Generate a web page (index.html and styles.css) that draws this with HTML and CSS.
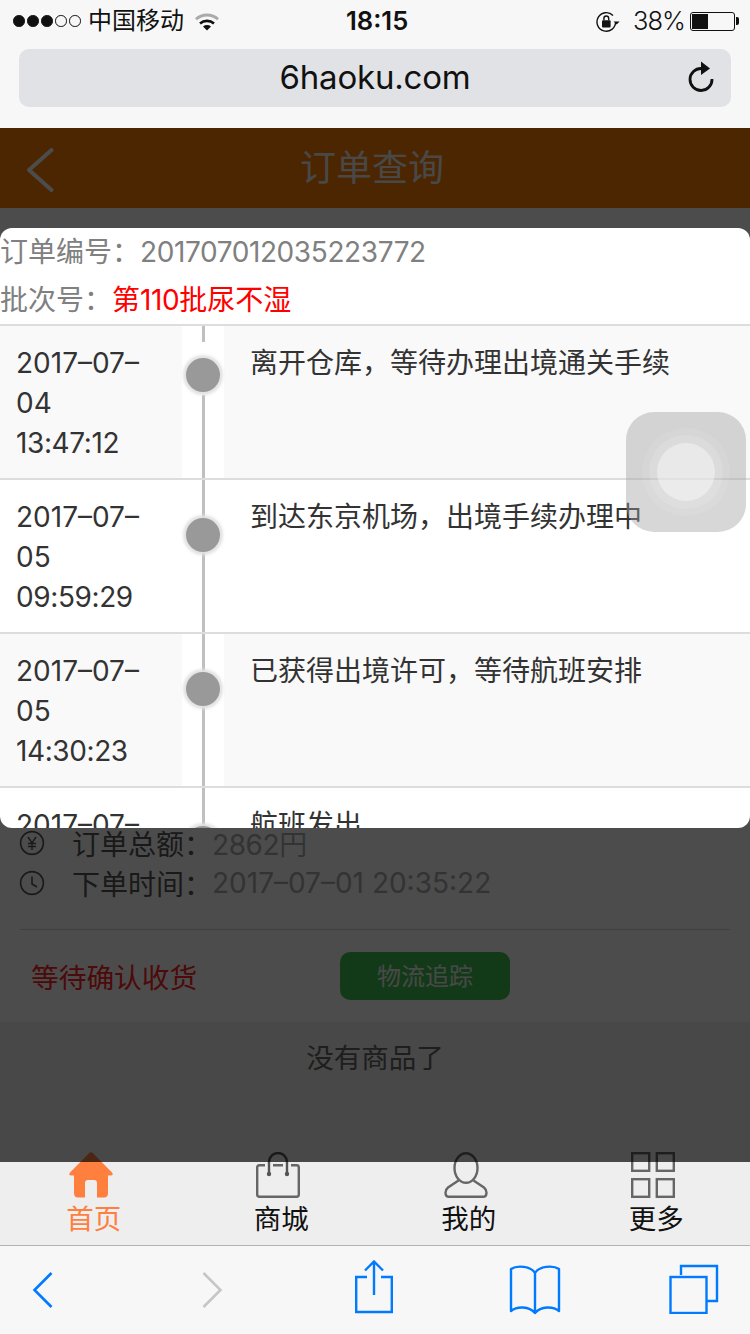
FILE: index.html
```html
<!DOCTYPE html>
<html lang="zh-CN">
<head>
<meta charset="utf-8">
<title>订单查询</title>
<link rel="stylesheet" href="styles.css">
</head>
<body>
<div class="phone">
  <div class="chrome">
    <div class="status">
      <div class="status-left">
        <span class="sig on"></span><span class="sig on"></span><span class="sig on"></span><span class="sig"></span><span class="sig"></span>
        <span class="carrier">中国移动</span>
        <svg class="wifi" width="24" height="18" viewBox="0 0 24 18"><path d="M1 6.2C7 .6 17 .6 23 6.2" fill="none" stroke="#aaa" stroke-width="2.8"/><path d="M5 10.4C9 7 15 7 19 10.4" fill="none" stroke="#111" stroke-width="2.6"/><path d="M8 13.4C10.5 11.6 13.5 11.6 16 13.4L12 17.6Z" fill="#111"/></svg>
      </div>
      <div class="time">18:15</div>
      <div class="status-right">
        <svg class="lock" width="24" height="22" viewBox="0 0 24 22"><path d="M19.6 11A9.3 9.3 0 1 1 17 4.5" fill="none" stroke="#111" stroke-width="1.4"/><path d="M17.6 10.4h6l-3 3.2z" fill="#111"/><rect x="6" y="9.2" width="8.6" height="7.2" rx="1" fill="#111"/><path d="M7.9 9.2V7.4a2.4 2.4 0 0 1 4.8 0v1.8" fill="none" stroke="#111" stroke-width="1.4"/></svg>
        <span class="pct">38%</span>
        <span class="battery"><span class="battery-fill"></span></span>
      </div>
    </div>
    <div class="urlbar">
      <span class="url">6haoku.com</span>
      <svg class="reload" width="28" height="34" viewBox="0 0 28 34"><path d="M14.5 7.5A11 11 0 1 0 25 18" fill="none" stroke="#111" stroke-width="2.8"/><path d="M14 0.5L23 7.5L14 14Z" fill="#111"/></svg>
    </div>
  </div>

  <div class="webview">
    <header class="topbar">
      <svg class="top-back" width="30" height="52" viewBox="0 0 30 52"><path d="M26.5 6L4 26L26.5 46" fill="none" stroke="#fff" stroke-width="4" stroke-linecap="round" stroke-linejoin="round"/></svg>
      <h1 class="top-title">订单查询</h1>
    </header>

    <main class="content">
      <div class="card">
        <div class="info-row">
          <svg class="info-icon" width="26" height="26" viewBox="0 0 26 26"><circle cx="13" cy="13" r="11.4" fill="none" stroke="#555" stroke-width="1.6"/><path d="M9 7l4 6 4-6M13 13v7M9 13.5h8M9 16.5h8" fill="none" stroke="#555" stroke-width="1.4"/></svg>
          <span class="info-label">订单总额：</span><span class="info-value num">2862円</span>
        </div>
        <div class="info-row">
          <svg class="info-icon" width="26" height="26" viewBox="0 0 26 26"><circle cx="13" cy="13" r="11.4" fill="none" stroke="#555" stroke-width="1.6"/><path d="M13 6.5V14l5 3" fill="none" stroke="#555" stroke-width="1.6"/></svg>
          <span class="info-label">下单时间：</span><span class="info-value">2017–07–01 20:35:22</span>
        </div>
        <div class="actions">
          <span class="order-state">等待确认收货</span>
          <span class="track">物流追踪</span>
        </div>
      </div>
      <p class="no-more">没有商品了</p>
    </main>

    <nav class="tabs">
      <div class="tab tab-active">
        <svg class="tab-icon" width="44" height="46" viewBox="0 0 44 46"><path d="M20.5 .8Q22 -.4 23.5 .8L43 20.5Q45 23.5 41.5 23.5H39V41Q39 45.5 35 45.5H28V31Q28 28 25 28H19Q16 28 16 31V45.5H9Q5 45.5 5 41V23.5H2.5Q-1 23.5 1 20.5Z" fill="#ff7f3f"/></svg>
        <span>首页</span>
      </div>
      <div class="tab">
        <svg class="tab-icon" width="44" height="46" viewBox="0 0 44 46"><path d="M9 13.2H3.4Q1.2 13.2 1.2 15.4V42.6Q1.2 44.8 3.4 44.8H40.6Q42.8 44.8 42.8 42.6V15.4Q42.8 13.2 40.6 13.2H35M17 13.2H27" fill="none" stroke="#666" stroke-width="2.4"/><path d="M13 22V10a9 9 0 0 1 18 0v12" fill="none" stroke="#555" stroke-width="2.4"/><circle cx="13" cy="22" r="2.2" fill="#555"/><circle cx="31" cy="22" r="2.2" fill="#555"/></svg>
        <span>商城</span>
      </div>
      <div class="tab">
        <svg class="tab-icon" width="44" height="46" viewBox="0 0 44 46"><ellipse cx="22" cy="16" rx="11.5" ry="14.8" fill="none" stroke="#666" stroke-width="2.4"/><path d="M14.5 28.5L4 35.5Q1.5 37.5 1.5 40.8Q1.5 44.8 5 44.8H39Q42.5 44.8 42.5 40.8Q42.5 37.5 40 35.5L29.5 28.5" fill="none" stroke="#666" stroke-width="2.4"/></svg>
        <span>我的</span>
      </div>
      <div class="tab">
        <svg class="tab-icon" width="44" height="46" viewBox="0 0 44 46"><g fill="none" stroke="#666" stroke-width="2.4"><rect x="1.2" y="1.2" width="17" height="17.6"/><rect x="25.8" y="1.2" width="17" height="17.6"/><rect x="1.2" y="27.2" width="17" height="17.6"/><rect x="25.8" y="27.2" width="17" height="17.6"/></g></svg>
        <span>更多</span>
      </div>
    </nav>

    <div class="overlay"></div>

    <section class="modal">
      <div class="modal-head">
        <div class="head-line">订单编号：<span class="order-no num">201707012035223772</span></div>
        <div class="head-line">批次号：<span class="batch">第<span class="num">110</span>批尿不湿</span></div>
      </div>
      <div class="row shaded first">
        <div class="date">2017–07–<br>04<br><span class="num">13:47:12</span></div>
        <div class="mid"><span class="dot-wrap"><span class="dot"></span></span></div>
        <div class="desc">离开仓库，等待办理出境通关手续</div>
      </div>
      <div class="row">
        <div class="date">2017–07–<br>05<br><span class="num">09:59:29</span></div>
        <div class="mid"><span class="dot-wrap"><span class="dot"></span></span></div>
        <div class="desc">到达东京机场，出境手续办理中</div>
      </div>
      <div class="row shaded">
        <div class="date">2017–07–<br>05<br><span class="num">14:30:23</span></div>
        <div class="mid"><span class="dot-wrap"><span class="dot"></span></span></div>
        <div class="desc">已获得出境许可，等待航班安排</div>
      </div>
      <div class="row">
        <div class="date">2017–07–</div>
        <div class="mid"><span class="dot-wrap"><span class="dot"></span></span></div>
        <div class="desc">航班发出</div>
      </div>
    </section>

    <div class="assist"><span class="ring ring-a"><span class="ring ring-b"><span class="ring ring-c"></span></span></span></div>
  </div>

  <footer class="toolbar">
    <svg class="tb-back" width="22" height="38" viewBox="0 0 22 38"><path d="M19.5 2L2.5 19L19.5 36" fill="none" stroke="#007aff" stroke-width="2.6"/></svg>
    <svg class="tb-forward" width="22" height="38" viewBox="0 0 22 38"><path d="M2.5 2L19.5 19L2.5 36" fill="none" stroke="#c6c6c6" stroke-width="2.6"/></svg>
    <svg class="tb-share" width="38" height="54" viewBox="0 0 38 54"><path d="M12 17H1.2V52H36.8V17H26" fill="none" stroke="#007aff" stroke-width="2.4"/><path d="M19 2V35M10 10.5L19 1.5L28 10.5" fill="none" stroke="#007aff" stroke-width="2.4"/></svg>
    <svg class="tb-book" width="52" height="50" viewBox="0 0 52 50"><path d="M26 8C22 1 8 0 2 4V46C8 41 20 41 26 48C32 41 44 41 50 46V4C44 0 30 1 26 8ZM26 8V48" fill="none" stroke="#007aff" stroke-width="2.4" stroke-linejoin="round"/></svg>
    <svg class="tb-tabs" width="50" height="50" viewBox="0 0 50 50"><path d="M12 11V2H48V37H38" fill="none" stroke="#007aff" stroke-width="2.4"/><rect x="1.5" y="13" width="36" height="36" fill="none" stroke="#007aff" stroke-width="2.4"/></svg>
  </footer>
</div>
</body>
</html>
```
FILE: styles.css
```css
* { box-sizing: border-box; }
html, body { margin: 0; padding: 0; }
body {
  width: 750px;
  height: 1334px;
  overflow: hidden;
  font-family: "Inter", "Noto Sans CJK SC", "Noto Sans", sans-serif;
  color: #333;
}
.phone { display: flex; flex-direction: column; width: 750px; height: 1334px; background: #fff; }
.num { letter-spacing: -0.4px; }

/* browser chrome */
.chrome { height: 128px; flex: none; background: #f7f7f7; padding-top: 8px; }
.status { display: flex; align-items: center; justify-content: space-between; height: 26px; padding: 0 15px 0 13px; position: relative; }
.status-left { display: flex; align-items: center; gap: 2.4px; }
.sig { width: 11.6px; height: 11.6px; border-radius: 50%; border: 1px solid #111; }
.sig.on { background: #111; }
.carrier { font-size: 24px; line-height: 26px; color: #111; margin-left: 5px; }
.wifi { margin-left: 9px; margin-top: 2px; }
.time { position: absolute; left: 346px; font-size: 25.6px; font-weight: 600; line-height: 26px; color: #111; }
.status-right { display: flex; align-items: center; }
.lock { margin-top: 1px; }
.pct { font-size: 25.5px; line-height: 26px; color: #111; margin-left: 13px; font-weight: 300; letter-spacing: -1px; }
.battery { display: block; position: relative; width: 45px; height: 19px; margin-left: 5px; border: 1.5px solid #111; border-radius: 3px; padding: 1px; }
.battery::after { content: ""; position: absolute; right: -5px; top: 4px; width: 3px; height: 8px; background: #111; border-radius: 0 2px 2px 0; }
.battery-fill { display: block; width: 16px; height: 100%; background: #111; }
.urlbar { display: flex; align-items: center; justify-content: center; position: relative; height: 58px; margin: 15px 19px 0; padding-bottom: 2px; background: #e1e2e5; border-radius: 10px; }
.url { font-size: 33px; color: #111; letter-spacing: -0.2px; }
.reload { position: absolute; right: 16px; top: 12px; }

/* page beneath */
.webview { position: relative; flex: 1; display: flex; flex-direction: column; background: #f0f0f0; min-height: 0; }
.topbar { flex: none; display: flex; align-items: center; justify-content: center; position: relative; height: 80px; background: #ff8000; }
.top-back { position: absolute; left: 25px; top: 16px; }
.top-title { margin: -6px 6px 0 0; font-size: 36px; font-weight: 400; color: #f0f0f0; }
.content { flex: 1; min-height: 0; }
.card { background: #fff; height: 814px; padding-top: 615px; }
.info-row { display: flex; align-items: center; height: 40px; padding-left: 19px; font-size: 28px; }
.info-icon { margin-right: 27px; flex: none; }
.info-label { color: #555; }
.info-value { color: #aaa; }
.actions { display: flex; align-items: center; margin: 26px 20px 0; padding: 22px 0 0 11px; border-top: 1px solid #d5d5d5; }
.order-state { font-size: 27.7px; color: #f22; width: 309px; }
.track { display: flex; align-items: center; justify-content: center; width: 170px; height: 48px; padding-bottom: 3px; background: #3fc351; border-radius: 10px; font-size: 24px; color: #f2f2f2; }
.no-more { margin: 17px 0 0; text-align: center; font-size: 27.5px; line-height: 38px; color: #666; }

.tabs { flex: none; display: grid; grid-template-columns: repeat(4, 1fr); height: 84px; background: #eee; border-bottom: 1px solid #b2b2b2; }
.tab { display: flex; flex-direction: column; align-items: center; font-size: 27.5px; line-height: 40px; color: #111; }
.tab-icon { margin: -10px 0 1px -6px; flex: none; }
.tab-active { color: #ff7f3f; }

.overlay { position: absolute; left: 0; right: 0; top: 0; bottom: 84px; background: rgba(0, 0, 0, 0.7); }

/* modal */
.modal { position: absolute; left: 0; right: 0; top: 100px; height: 600px; overflow: hidden; background: #fff; border-radius: 12px; }
.modal-head { height: 96px; padding-top: 1px; font-size: 28px; color: #808080; }
.head-line { height: 47.5px; line-height: 47.5px; white-space: nowrap; }
.order-no { color: #808080; }
.batch { color: #f00; }
.row { display: grid; grid-template-columns: 182px 42px 1fr; height: 154px; border-top: 2px solid #ddd; font-size: 28px; line-height: 40px; color: #333; }
.date { padding: 17px 0 0 16px; }
.shaded .date, .shaded .desc { background: #f9f9f9; }
.desc { padding: 17px 0 0 26px; white-space: nowrap; }
.mid { position: relative; display: flex; flex-direction: column; align-items: center; }
.mid::before { content: ""; position: absolute; left: 19.5px; top: 0; bottom: 0; width: 3px; background: #bfbfbf; }
.dot-wrap { position: relative; display: block; margin-top: 35px; padding: 3px; }
.first .dot-wrap { margin-top: 16px; padding-top: 16px; background: #fff; }
.dot { display: block; width: 34px; height: 34px; border-radius: 50%; background: #999; box-shadow: 0 0 3px 3px #e2e2e2; }

/* floating button */
.assist { position: absolute; left: 626px; top: 284px; width: 120px; height: 120px; display: flex; align-items: center; justify-content: center; background: rgba(160, 160, 160, 0.42); border-radius: 28px; }
.ring { display: flex; align-items: center; justify-content: center; border-radius: 50%; }
.ring-a { width: 88px; height: 88px; background: rgba(255, 255, 255, 0.08); }
.ring-b { width: 74px; height: 74px; background: rgba(255, 255, 255, 0.12); }
.ring-c { width: 58px; height: 58px; background: rgba(255, 255, 255, 0.4); }

/* safari toolbar */
.toolbar { flex: none; height: 88px; background: #f7f7f7; display: flex; align-items: flex-start; padding-left: 32px; }
.tb-back { margin-top: 25px; }
.tb-forward { margin: 25px 0 0 147px; }
.tb-share { margin: 14px 0 0 132px; }
.tb-book { margin: 19px 0 0 116px; }
.tb-tabs { margin: 18px 0 0 108px; }
```
